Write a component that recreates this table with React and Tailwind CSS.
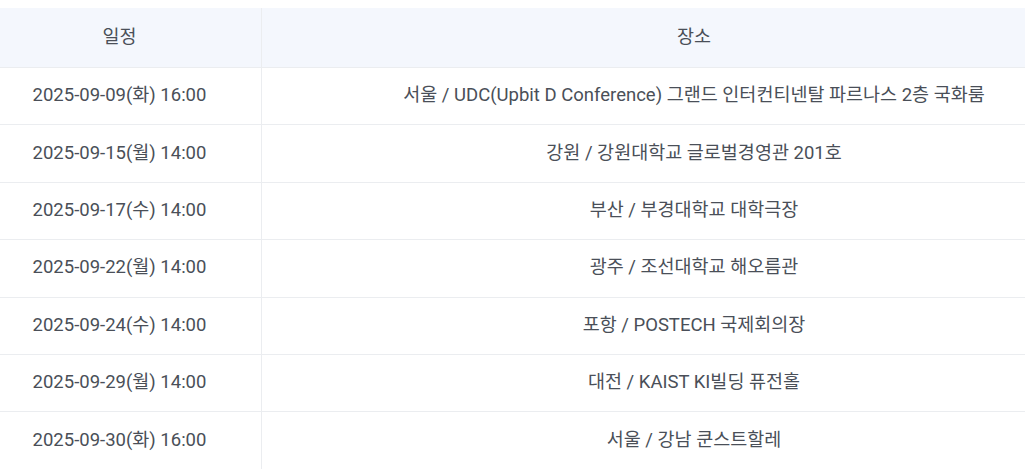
export default function App() {
  const rows = [
    ["2025-09-09(화) 16:00", "서울 / UDC(Upbit D Conference) 그랜드 인터컨티넨탈 파르나스 2층 국화룸"],
    ["2025-09-15(월) 14:00", "강원 / 강원대학교 글로벌경영관 201호"],
    ["2025-09-17(수) 14:00", "부산 / 부경대학교 대학극장"],
    ["2025-09-22(월) 14:00", "광주 / 조선대학교 해오름관"],
    ["2025-09-24(수) 14:00", "포항 / POSTECH 국제회의장"],
    ["2025-09-29(월) 14:00", "대전 / KAIST KI빌딩 퓨전홀"],
    ["2025-09-30(화) 16:00", "서울 / 강남 쿤스트할레"],
  ];
  return (
    <div className="w-[1025px] h-[469px] overflow-hidden bg-white pt-2" style={{ fontFamily: 'Roboto, "Noto Sans CJK KR", sans-serif' }}>
      <div className="ml-[-22px] w-[1148px] text-[18.5px] text-[#4a4f58]">
        <div className="flex h-[60px] bg-[#f4f7fd] border-b border-[#ebedf0]">
          <div className="w-[284px] flex items-center justify-center border-r border-[#ebedf0]">일정</div>
          <div className="flex-1 flex items-center justify-center">장소</div>
        </div>
        {rows.map((r, i) => (
          <div key={i} className="flex h-[57.4px] border-b border-[#ebedf0]">
            <div className="w-[284px] flex items-center justify-center border-r border-[#ebedf0]">{r[0]}</div>
            <div className="flex-1 flex items-center justify-center">{r[1]}</div>
          </div>
        ))}
      </div>
    </div>
  );
}
